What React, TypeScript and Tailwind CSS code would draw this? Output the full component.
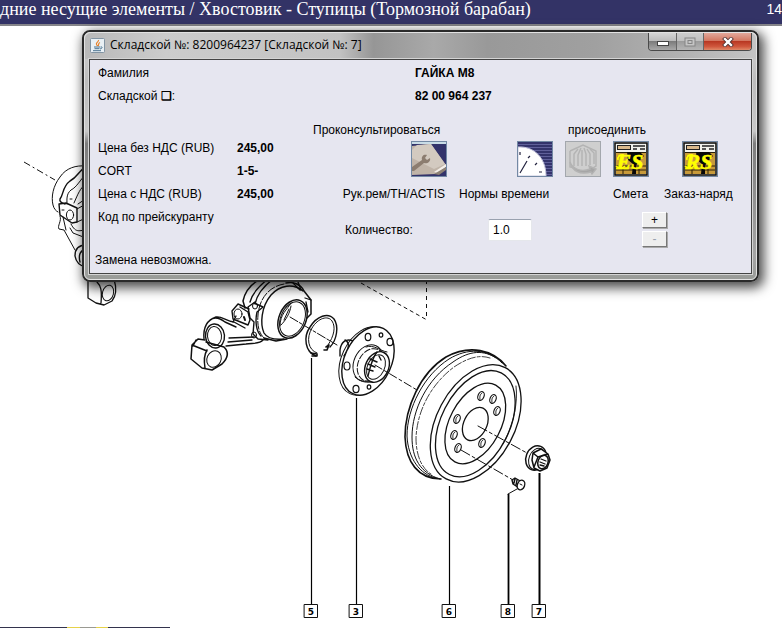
import type { ReactNode } from "react"

const holes = [
  [481, 396],
  [493, 399],
  [497, 411],
  [457, 419],
  [454, 435],
  [458, 448],
  [482, 443],
]

const callouts = [
  { n: "5", x: 311, top: 358, w: 1.2 },
  { n: "3", x: 356, top: 398, w: 1.2 },
  { n: "6", x: 449, top: 486, w: 1.2 },
  { n: "8", x: 508, top: 494, w: 1.8 },
  { n: "7", x: 539, top: 473, w: 2 },
]

const prices = [
  { label: "Цена без НДС (RUB)", value: "245,00" },
  { label: "CORT", value: "1-5-" },
  { label: "Цена с НДС (RUB)", value: "245,00" },
  { label: "Код по прейскуранту", value: "" },
]

const Diagram = () => {
  return (
    <svg
      viewBox="0 26 782 601"
      className="block h-[601px] w-[782px] max-w-none"
      fill="none"
      stroke="#111"
      strokeWidth="1"
      strokeLinecap="round"
      strokeLinejoin="round"
    >
      {/* Axis lines */}
      <g strokeDasharray="7 3 2 3" strokeLinecap="butt">
        <path d="M24 162 L55 180" />
        <path d="M361 283 L427 320" strokeDasharray="4 3" />
        <path d="M426.5 280 V320" strokeDasharray="4 4" />
      </g>

      {/* Left knuckle, mostly behind the window */}
      <path d="M86 166 C76 165 66 168 60 177 C53 186 51 197 53 205 C54 209 56 211 58 212" />
      <path d="M86 167 C79 170 78 177 70 181 C62 187 64 194 60 199 C59 202 62 203 65 204" strokeWidth="1.4" />
      <path d="M86 174 C80 180 77 187 71 190 C66 194 67 200 67 204 M86 184 C80 188 78 194 74 203 M78 204 L84 200" />
      <path d="M59 204 L66 203 L77 208 L77 222 L72 223 L60 215 Z" strokeWidth="1.4" />
      <ellipse cx="70" cy="215" rx="3.6" ry="5" />
      <path d="M77 209 L86 204 M77 222 L86 218 M62 210 h2 M70 199 h2" />
      <path d="M60 216 C62 221 57 226 59 229 L64 230 L75 250 M63 217 L66 230 M71 224 C76 234 80 230 86 230 M70 228 L73 233 L86 238" />
      <path d="M86 245 C78 245 75 249 75 256 C76 262 80 266 86 267 M86 249 C81 250 78 254 80 262" strokeWidth="1.4" />
      <path d="M88 278 V298 L96 303 L104 305 L112 301 C116 296 117 289 114 279 M97 282 C101 286 102 290 101 303" strokeWidth="1.3" />
      <ellipse cx="108" cy="293" rx="5.5" ry="8" transform="rotate(15 108 293)" />

      {/* Main knuckle */}
      <g>
        <path d="M262 278 C252 283 245 291 243 301 L245 308" strokeWidth="1.5" />
        <path d="M268 279 C259 286 252 294 250 302 M273 279 C264 286 257 294 255 304 M254 303 L263 307 L257 312 C255 321 256 331 261 336" strokeWidth="1.4" />
        <path d="M284 284 C267 287 259 301 258 315 C257 326 259 333 264 338" strokeDasharray="8 2" />
        <path d="M303 291 C293 283 280 285 271 295 C261 307 260 324 264 333 C267 338 274 340 284 339" strokeWidth="1.4" />
        <path d="M286 283 C294 281 301 285 304 291 L311 300 L311 314 L307 318" strokeWidth="1.5" />
        <path d="M293 283 L300 290 M298 282 L301 290 M305 298 L311 300 M306 302 L308 312" strokeWidth="1.3" />
        <ellipse cx="292.5" cy="319" rx="13.5" ry="20" transform="rotate(23 292.5 319)" strokeWidth="1.5" />
        <ellipse cx="292.5" cy="319" rx="11.8" ry="18" transform="rotate(23 292.5 319)" />
        <path d="M291 303 C287 310 280 314 280 326 M291 306 C290 313 286 320 281 325 M289 309 L284 320" />
        <path d="M264 338 L276 341 L287 339 M255 302 L248 307 L250 318 L254 322 L253 334 L258 339 L268 340" strokeWidth="1.4" />
        <ellipse cx="255" cy="306" rx="2.5" ry="3" />
        <ellipse cx="254" cy="335" rx="2.5" ry="3" />
        {/* Small lug */}
        <path d="M232 311 L238 304 L249 309 M232 311 L233 319 L248 325 L250 320 L248 312 L240 307" strokeWidth="1.4" />
        <ellipse cx="238" cy="314" rx="4" ry="5" />
        <path d="M244 317 l1 3" strokeWidth="2" />
        {/* Arm */}
        <path d="M204 339 C203 328 207 320 216 317 C222 316 226 321 234 322 L245 328 M210 320 C215 316 221 319 225 322 L236 327" strokeWidth="1.4" />
        <path d="M226 346 L246 344 C254 343 260 344 263 340 M228 342 L252 340 M229 338 L254 337 M233 322 L236 316" strokeWidth="1.3" />
        <ellipse cx="215" cy="336" rx="9.5" ry="12" transform="rotate(-5 215 336)" strokeWidth="1.4" />
        <ellipse cx="214.5" cy="336" rx="7" ry="9.5" transform="rotate(-5 214.5 336)" />
        <path d="M192 345 L198 339 L205 340 M192 345 L191 359 L202 368 L212 370 L222 364 C228 358 229 352 224 347 L206 342 M192 345 L207 351 M207 350 C204 355 204 362 205 368 M196 340 L193 346" strokeWidth="1.5" />
        <ellipse cx="214" cy="359" rx="7" ry="8.5" transform="rotate(25 214 359)" />
      </g>
      <path d="M290 317 L337 345" strokeDasharray="9 2 3 2" />

      {/* Retaining ring */}
      <path d="M316 356 C305 352 303 337 310 327 C317 316 328 312 334 319 C339 326 337 340 330 347" strokeWidth="1.4" />
      <path d="M317 353 C308 350 306 338 312 328 C318 318 328 315 332 321 C336 327 334 336 328 345" />
      <path d="M311 353 L317 354 L317 356 L312 356 M326 347 L329 345 L327 350 L324 350" strokeWidth="1.6" />

      {/* Hub flange */}
      <path d="M353 341 C346 338 341 342 340 350 L340 356 M345 340 C351 343 348 350 344 356" strokeWidth="1.4" />
      <ellipse cx="365" cy="361" rx="23.5" ry="36" transform="rotate(25 365 361)" />
      <ellipse cx="368" cy="361" rx="23.5" ry="36" transform="rotate(25 368 361)" fill="white" strokeWidth="1.4" />
      <ellipse cx="368" cy="363" rx="14" ry="19" transform="rotate(25 368 363)" />
      <ellipse cx="371" cy="365" rx="13" ry="17" transform="rotate(25 371 365)" strokeDasharray="6 2" />
      <path d="M366 347 C374 344 380 351 387 352 M355 377 C359 381 365 383 371 382" />
      <ellipse cx="377" cy="367" rx="11.5" ry="16" transform="rotate(25 377 367)" fill="white" strokeWidth="1.4" />
      <ellipse cx="376" cy="367" rx="8.5" ry="13" transform="rotate(25 376 367)" />
      <path d="M370 359 l7 3 M368 364 l7 3 M367 369 l6 2 M379 356 l2 4 M377 352 C372 358 370 368 368 376" strokeWidth="1.4" />
      <g strokeWidth="1.2">
        <ellipse cx="368" cy="337" rx="2.8" ry="3.6" />
        <ellipse cx="381" cy="335" rx="1.8" ry="2.2" />
        <ellipse cx="390" cy="342" rx="3" ry="3.6" />
        <ellipse cx="347" cy="366" rx="3" ry="4" />
        <ellipse cx="356" cy="389" rx="3" ry="3.6" />
        <ellipse cx="369" cy="387" rx="1.8" ry="2.2" />
      </g>
      <path d="M375 365 L417 390" strokeDasharray="8 3 3 3" />

      {/* Brake drum */}
      <path d="M506 366 C493 350 470 344 446 357 C420 373 405 408 405 437 C406 462 418 479 441 479" strokeWidth="1.6" />
      <path d="M502 363 C488 348 467 348 449 359 C424 375 407 408 407 436 C408 458 420 475 436 478" />
      <path d="M496 358 C484 350 470 350 453 362 C427 379 412 410 412 437 C412 458 420 473 440 479" />
      <path d="M490 358 C478 354 466 359 454 367 C430 385 417 412 416 438 C416 454 421 468 431 474" strokeDasharray="8 2 3 2" strokeWidth="0.8" />
      <ellipse cx="475.7" cy="423.3" rx="39" ry="63" transform="rotate(28 475.7 423.3)" fill="white" strokeWidth="1.3" />
      <ellipse cx="475.3" cy="423.7" rx="34" ry="57" transform="rotate(27 475.3 423.7)" strokeWidth="1.3" />
      <path d="M516 386 C518 402 514 424 503 444" strokeWidth="0.9" />
      <ellipse cx="475.3" cy="423.5" rx="25.5" ry="43.5" transform="rotate(28 475.3 423.5)" strokeWidth="1.3" />
      <ellipse cx="475.3" cy="424" rx="11.5" ry="17.6" transform="rotate(26 475.3 424)" strokeWidth="1.3" />
      {holes.map(([x, y]) => (
        <g key={`${x}-${y}`}>
          <ellipse cx={x} cy={y} rx="3" ry="4.6" transform={`rotate(22 ${x} ${y})`} strokeWidth="1.2" />
          <path d={`M${x + 1} ${y - 3} C${x - 2} ${y - 1} ${x - 1} ${y + 2} ${x - 1} ${y + 4}`} />
        </g>
      ))}
      <path d="M478 426 L527 453" strokeDasharray="10 3 3 3" />
      <path d="M461 450 L513 480" strokeDasharray="10 3 3 3" />

      {/* Nut */}
      <ellipse cx="536" cy="458" rx="10" ry="12.5" transform="rotate(22 536 458)" fill="white" strokeWidth="1.5" />
      <ellipse cx="537" cy="459" rx="8" ry="11" transform="rotate(22 537 459)" />
      <path d="M533 453 L541 449 L548 454 L550 460 L547 468 L540 471 L534 468 L532 460 Z M533 453 L538 457 L548 454 M538 457 L534 467" fill="white" strokeWidth="1.5" />
      <ellipse cx="543" cy="462" rx="5" ry="7" transform="rotate(20 543 462)" strokeWidth="1.5" />
      <path d="M541 459 l5 2 M540 462 l5 2 M540 465 l4 1" strokeWidth="1.3" />

      {/* Screw */}
      <path d="M512 480 L515 478 L522 482 M512 480 L513 484 L519 488 M515 479 l-1 4 M517 480 l-1 5" strokeWidth="1.4" />
      <ellipse cx="521" cy="485" rx="3.6" ry="5" transform="rotate(20 521 485)" fill="white" strokeWidth="1.4" />
      <path d="M520 484 l2 1 M517 489 L508 494" />

      {/* Callouts */}
      {callouts.map((c) => (
        <g key={c.n}>
          <path d={`M${c.x + 0.5} ${c.top} V604`} strokeWidth={c.w} stroke="#000" strokeLinecap="butt" />
          <rect x={c.x - 6.5} y="604.5" width="13" height="13" fill="white" />
          <text
            x={c.x}
            y="614.5"
            textAnchor="middle"
            fill="#000"
            stroke="none"
            className="font-['DejaVu_Sans',sans-serif] text-[9px] font-bold"
          >
            {c.n}
          </text>
        </g>
      ))}
    </svg>
  )
}

const JavaIcon = () => (
  <svg viewBox="0 0 15 15" className="size-[15px]" fill="none">
    <rect x="0.5" y="0.5" width="14" height="14" rx="1" fill="#e9f0f5" stroke="#8294a3" />
    <path d="M8.5 2 C9 4 5.5 4.5 6.5 6.5 L7.5 8 M10 4.5 C7.5 5.5 9.5 6.5 8 8" stroke="#e8822a" strokeWidth="1.2" />
    <path d="M4 9 H10 M4.5 10.7 H9.5 M3 12.7 H11 M10.5 9 C13 8.5 12.5 10.5 10 11" stroke="#4a7391" strokeWidth="1" />
  </svg>
)

const ManualIcon = () => (
  <svg viewBox="0 0 34 34" className="block size-full">
    <rect width="34" height="34" fill="#33336b" />
    <path d="M0 0 H34 V2 H0 Z" fill="#c9dce6" />
    <path d="M0 4 L19 2 L34 23 L24 32 L0 33 Z" fill="#c0b4a8" />
    <path d="M5 3 L19 2 L33 22 L22 27 L0 16 V8 Z" fill="#d3cac0" />
    <path d="M22 30 L34 22 V25 L26 31 Z" fill="#f4efe9" />
    <path d="M22 32 L34 25 V28 L27 33 Z" fill="#8d8174" />
    <path d="M0 25 L10 18 C9 14 12 12 15 13 L13 16 L15 18 L18 16 C19 20 15 22 12 21 L2 29 H0 Z" fill="#8c7d70" />
  </svg>
)

const TimeIcon = () => (
  <svg viewBox="0 0 34 34" className="block size-full">
    <rect width="34" height="34" fill="#33336b" />
    <path d="M0 2.5 H34 M0 5.5 H34 M0 8.5 H34 M0 11.5 H34 M0 14.5 H34 M0 17.5 H34 M0 20.5 H34 M0 23.5 H34 M0 26.5 H34 M0 29.5 H34 M0 32.5 H34" stroke="#60609a" strokeWidth="1" />
    <path d="M0 5 C16 4 28 16 28 34 H0 Z" fill="white" stroke="#c5c5dc" />
    <path d="M2 31 L9 19 M2 10 V13 M10 16 L12 14 M17 23 L19 21 M21 30 H24" stroke="#22223f" strokeWidth="1.2" />
  </svg>
)

const DialogysIcon = () => (
  <svg viewBox="0 0 34 34" className="block size-full" fill="none" stroke="#b3b3b3" strokeWidth="1.4">
    <rect width="34" height="34" fill="#cfcfcf" stroke="none" />
    <path d="M4 9 L17 3 L30 9 V24 L25 27 M4 9 V25 L9 26" />
    <path d="M8 24 V12 L12 7 M12 24 V13 L15 6 M16 24 V8 M20 24 V12 L18 6 M24 23 V12 L21 7 M28 22 V11 L24 7" />
    <path d="M4 20 C7 28 16 30 24 27 L23 24 L30 27 L26 32 L25 30 C14 33 6 29 4 20 Z" fill="#a6a6a6" />
  </svg>
)

const OrderIcon = ({ letters }: { letters: string }) => (
  <svg viewBox="0 0 34 34" className="block size-full">
    <rect width="34" height="34" fill="#f2f2ec" />
    <rect x="1" y="1" width="32" height="32" fill="none" stroke="#111" strokeWidth="1.6" />
    <rect x="3.5" y="3.5" width="13" height="4" fill="#d9b98c" stroke="#222" />
    <path d="M19 4 H31 M19 7 H23 M26 7 H31" stroke="#222" strokeWidth="1.4" />
    <rect x="2" y="11" width="30" height="21" fill="#c79a3a" />
    <path d="M2 10.5 H32 M2 24 H32 M2 28 H32 M9 24 V32 M25 24 V32" stroke="#2a2108" strokeWidth="1" />
    <path d="M13 10 H26 L30 14 L24 20 L22 24 V32 H18 L19 22 L14 18 Z" fill="#080808" />
    <text
      x="16"
      y="27"
      textAnchor="middle"
      fill="#ffff00"
      stroke="#ffff00"
      strokeWidth="0.6"
      className="font-['Liberation_Serif',serif] text-[22px] font-bold italic"
    >
      {letters}
    </text>
    <path d="M4 18 C3 15 6 12 10 13 M2 24 C5 27 8 27 11 24" fill="none" stroke="#ffff00" strokeWidth="1.6" />
  </svg>
)

const IconButton = ({ label, disabled, className = "", children }: {
  label: string
  disabled?: boolean
  className?: string
  children: ReactNode
}) => (
  <button
    type="button"
    aria-label={label}
    disabled={disabled}
    className={`size-9 border border-[#7389a4] disabled:border-[#a3a7ad] ${className}`}
  >
    {children}
  </button>
)

const StepButton = ({ children, disabled }: { children: ReactNode; disabled?: boolean }) => (
  <button
    type="button"
    disabled={disabled}
    className="flex h-4 w-[25px] items-center justify-center border border-t-white border-l-white border-r-[#777] border-b-[#777] bg-[#eeeeee] text-xs text-black shadow-[1px_1px_0_#aaa] disabled:text-gray-400"
  >
    {children}
  </button>
)

const PartDialog = () => {
  return (
    <section className="absolute top-1 left-[82px] w-[677px] rounded-lg border-2 border-[#2a2a2a] bg-[linear-gradient(180deg,#d4d4d4_0%,#bcbcbc_20%,#c8c8c8_40%,#7d7d7d_45%,#8b8b8b_60%,#a5a5a5_90%,#999b98_100%)] shadow-[3px_4px_12px_2px_rgba(0,0,0,0.7)]">
      <div className="rounded-md border border-[#e2e2e2] px-1 pb-[5px]">
        {/* Title bar */}
        <div className="-mx-1 flex h-[26px] items-start rounded-t-md bg-[linear-gradient(90deg,#b9b9b9_0%,#cccccc_12%,#c2c2c2_38%,#969696_43%,#a9a9a9_52%,#999999_60%,#a0a0a0_76%,#b3b3b3_90%,#c4c4c4_100%)] pl-[5px]">
          <div className="flex flex-1 items-center gap-[5px] pt-0.5">
            <JavaIcon />
            <h2 className="font-['Open_Sans',sans-serif] text-xs leading-5 text-black">
              Складской №: 8200964237 [Складской №: 7]
            </h2>
          </div>
          <div className="mr-1 flex h-[18px] overflow-hidden rounded-b border border-t-0 border-[#4a4a4a]">
            <button type="button" aria-label="Свернуть" className="flex w-7 items-center justify-center border-r border-[#666] bg-[linear-gradient(#d5d5d5_0%,#bcbcbc_45%,#7c7c7c_50%,#a8a8a8_100%)]">
              <svg viewBox="0 0 12 5" className="mt-1 h-[5px] w-3">
                <rect x="0.5" y="0.5" width="11" height="4" fill="white" stroke="#444" />
              </svg>
            </button>
            <button type="button" aria-label="Развернуть" disabled className="flex w-[27px] items-center justify-center border-r border-[#666] bg-[linear-gradient(#cccccc_0%,#c0c0c0_45%,#9c9c9c_50%,#b5b5b5_100%)]">
              <svg viewBox="0 0 12 10" className="h-[10px] w-3" fill="none" stroke="#858585">
                <rect x="1" y="1" width="10" height="8" fill="#c5c5c5" />
                <rect x="4" y="3.5" width="4" height="3" />
              </svg>
            </button>
            <button type="button" aria-label="Закрыть" className="flex w-[47px] items-center justify-center bg-[linear-gradient(#e2a89b_0%,#d37862_45%,#b93823_50%,#d0583e_80%,#df8968_100%)]">
              <svg viewBox="0 0 12 10" className="h-[10px] w-3" strokeLinecap="square">
                <path d="M3 2 L9 8 M9 2 L3 8" stroke="#4d3030" strokeWidth="4" />
                <path d="M3 2 L9 8 M9 2 L3 8" stroke="white" strokeWidth="2.4" />
              </svg>
            </button>
          </div>
        </div>

        {/* Content */}
        <form className="border border-[#444] bg-[#e6e6f0] pt-0.5 pb-px font-['Liberation_Sans',sans-serif] text-xs text-black outline outline-[#d4d4d4]">
          <dl className="grid grid-cols-[317px_1fr] pl-2 leading-[23px]">
            <dt>Фамилия</dt>
            <dd className="font-bold">ГАЙКА М8</dd>
            <dt>
              Складской <span className="font-bold">❑</span>:
            </dt>
            <dd className="font-bold">82 00 964 237</dd>
          </dl>

          <div className="flex pt-px pl-2">
            <dl className="grid w-[215px] shrink-0 auto-rows-[23px] grid-cols-[139px_1fr] pt-7 leading-[23px]">
              {prices.map((p) => (
                <div key={p.label} className="contents">
                  <dt>{p.label}</dt>
                  <dd className="font-bold">{p.value}</dd>
                </div>
              ))}
            </dl>

            <div className="pt-[10px]">
              <div className="grid grid-cols-[134px_94px_36px_39px_72px] gap-x-3 whitespace-nowrap leading-[22px]">
                <span className="col-span-2">Проконсультироваться</span>
                <span className="col-span-3 pl-[3px]">присоединить</span>
                <IconButton label="Рук.рем/TH/ACTIS" className="justify-self-end">
                  <ManualIcon />
                </IconButton>
                <IconButton label="Нормы времени" className="justify-self-end">
                  <TimeIcon />
                </IconButton>
                <IconButton label="присоединить" disabled>
                  <DialogysIcon />
                </IconButton>
                <IconButton label="Смета">
                  <OrderIcon letters="ES" />
                </IconButton>
                <IconButton label="Заказ-наряд" className="justify-self-center">
                  <OrderIcon letters="RS" />
                </IconButton>
                <span className="pt-1.5 pr-0.5 text-right">Рук.рем/TH/ACTIS</span>
                <span className="pt-1.5">Нормы времени</span>
                <span className="col-start-4 pt-1.5">Смета</span>
                <span className="pt-1.5">Заказ-наряд</span>
              </div>

              <div className="flex items-center pt-[7px] pl-8">
                <label htmlFor="quantity" className="w-[143px]">Количество:</label>
                <input
                  id="quantity"
                  type="text"
                  defaultValue="1.0"
                  className="h-[22px] w-11 rounded-xs border border-gray-200 border-t-gray-400 bg-white px-1 text-xs"
                />
                <div className="ml-[110px] flex flex-col gap-[3px]">
                  <StepButton>+</StepButton>
                  <StepButton disabled>-</StepButton>
                </div>
              </div>
            </div>
          </div>

          <p className="pt-0.5 pl-[5px] leading-[23px]">Замена невозможна.</p>
        </form>
      </div>
    </section>
  )
}

const App = () => {
  return (
    <div className="min-h-screen overflow-hidden bg-white">
      <header className="flex h-[26px] justify-between border-b-2 border-[#85858a] bg-[#333366] whitespace-nowrap text-white">
        <h1 className="font-['Liberation_Serif',serif] text-lg leading-[18px]">
          дние несущие элементы / Хвостовик - Ступицы (Тормозной барабан)
        </h1>
        <span className="font-['Liberation_Sans',sans-serif] text-sm leading-[18px]">14</span>
      </header>

      <main className="relative">
        <Diagram />
        <PartDialog />
      </main>

      {/* Top edge of the bottom toolbar */}
      <div className="flex h-px">
        <div className="w-[67px] bg-[#33334d]" />
        <div className="w-[13px] bg-[#e6d24a]" />
        <div className="w-4 bg-[#9a9a92]" />
        <div className="w-3 bg-[#e6d24a]" />
        <div className="w-[62px] bg-[#33334d]" />
      </div>
    </div>
  )
}

export default App
